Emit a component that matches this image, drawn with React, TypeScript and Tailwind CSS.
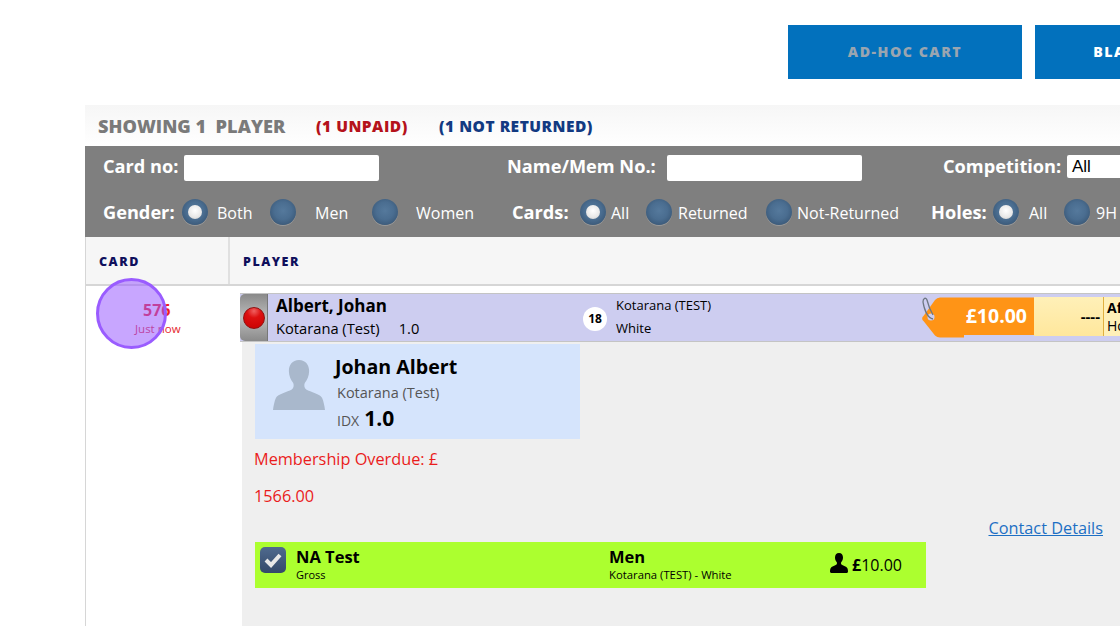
const font = { fontFamily: '"Open Sans", "Liberation Sans", sans-serif' };

const Radio = ({ checked = false }: { checked?: boolean }) => (
  <span className="flex h-[26px] w-[26px] shrink-0 items-center justify-center rounded-full bg-[radial-gradient(circle_at_50%_45%,#55799c_0%,#4a6d90_45%,#304b68_100%)] shadow-[0_1px_0_#9a9a9a]">
    {checked && (
      <span className="h-[14px] w-[14px] rounded-full bg-[radial-gradient(circle_at_50%_40%,#ffffff_0%,#e8e8e8_60%,#c4c4c4_100%)]" />
    )}
  </span>
);

const Avatar = () => (
  <svg width="52" height="50" viewBox="0 0 54 50" preserveAspectRatio="none" className="fill-[#a9b8cc]">
    <path d="M27 0c-7 0-10.500 5-10.500 11 0 5 2 9 4.500 12 1 2 .5 5-1.500 6.500C15 32 5 34 3 38 1.500 41 .500 46 0 50h54c-.5-4-1.500-9-3-12-2-4-12-6-16.500-8.500-2-1.500-2.500-4.500-1.500-6.500 2.500-3 4.500-7 4.500-12C37.500 5 34 0 27 0z" />
  </svg>
);

const PersonIcon = () => (
  <svg width="18" height="20" viewBox="0 0 18 20" className="mb-[4px] fill-black">
    <path d="M9 0C6.300 0 5 2 5 4.500c0 2 .8 3.600 1.800 4.800.4.800.2 1.900-.6 2.500C4.500 12.800 1.500 13.500.6 15.200.2 16 0 17.500 0 18.500 0 19.500 1 20 2 20h14c1 0 2-.5 2-1.500 0-1-.2-2.500-.6-3.300-.9-1.700-3.900-2.400-5.600-3.400-.8-.6-1-1.700-.6-2.500C12.200 8.100 13 6.500 13 4.500 13 2 11.700 0 9 0z" />
  </svg>
);

const PriceTag = () => (
  <div className="relative flex h-[42px] w-[112px] shrink-0 items-center justify-end pr-[7px]">
    <svg width="112" height="48" viewBox="0 0 112 48" className="absolute left-0 top-[-1px]">
      <path d="M18 1.500H112V39H42V41.500H18Q15 41.500 13 39.500L1.500 25a3 3 0 0 1 0-5L13 4Q15 1.500 18 1.500z" fill="#ff9416" />
      <circle cx="9" cy="21" r="3.500" fill="#cdcdf0" />
      <path d="M11 23C5 22 2 12 1 6 1 2 4 1 5 4 6 8 8 14 11 19" fill="none" stroke="#6d7682" strokeWidth="1.300" />
    </svg>
    <span className="relative mb-[3px] text-[19.500px] font-bold text-white">£10.00</span>
  </div>
);

const labelClass = "text-[18.200px] font-bold leading-none text-white";
const optionClass = "text-[16px] leading-none text-white";

export default function App() {
  return (
    <div className="h-[626px] w-[1120px] overflow-hidden bg-white text-black" style={font}>
      <div className="w-[1300px]">
        {/* Top buttons */}
        <div className="ml-[788px] flex gap-[13px] pt-[25px]">
          <button className="h-[54px] w-[234px] bg-[#0271bd] text-[14.200px] font-extrabold tracking-[1.500px] text-[#9aa5b0]">
            AD-HOC CART
          </button>
          <button className="h-[54px] w-[234px] bg-[#0271bd] text-[14.200px] font-extrabold tracking-[1.500px] text-white">
            BLANK CARDS
          </button>
        </div>

        <div className="ml-[85px] mt-[26px]">
          {/* Summary */}
          <div className="flex h-[41px] items-center bg-gradient-to-b from-[#f6f6f6] to-white pl-[13px] pt-[3px]">
            <span className="w-[218px] whitespace-pre text-[18.200px] font-extrabold text-[#7a7a7a]">SHOWING 1  PLAYER</span>
            <span className="w-[123px] text-[15.500px] font-extrabold tracking-[.5px] text-[#b5121b]">(1 UNPAID)</span>
            <span className="text-[15.500px] font-extrabold tracking-[.5px] text-[#123a82]">(1 NOT RETURNED)</span>
          </div>

          {/* Filters */}
          <div className="h-[91px] bg-[#7f7f7f] pl-[18px]">
            <div className="flex h-[47px] items-center pb-[3px]">
              <span className={`${labelClass} w-[81px] pb-[4px]`}>Card no:</span>
              <input className="h-[26px] w-[195px] rounded-[2px] bg-white" />
              <span className={`${labelClass} ml-[128px] w-[160px] pb-[4px]`}>Name/Mem No.:</span>
              <input className="h-[26px] w-[195px] rounded-[2px] bg-white" />
              <span className={`${labelClass} ml-[81px] w-[124px] pb-[4px]`}>Competition:</span>
              <div className="mb-[3px] flex h-[23px] w-[120px] items-center rounded-[2px] bg-white pl-[5px] text-[17px]" style={{ fontFamily: '"Liberation Sans", sans-serif' }}>
                All
              </div>
            </div>
            <div className="flex h-[38px] items-center">
              <span className={`${labelClass} w-[79px]`}>Gender:</span>
              <Radio checked />
              <span className={`${optionClass} ml-[9px] w-[53px] pt-[1px]`}>Both</span>
              <Radio />
              <span className={`${optionClass} ml-[19px] w-[57px] pt-[1px]`}>Men</span>
              <Radio />
              <span className={`${optionClass} ml-[18px] w-[96px] pt-[1px]`}>Women</span>
              <span className={`${labelClass} w-[68px]`}>Cards:</span>
              <Radio checked />
              <span className={`${optionClass} ml-[5px] w-[35px] pt-[1px]`}>All</span>
              <Radio />
              <span className={`${optionClass} ml-[6px] w-[88px] pt-[1px]`}>Returned</span>
              <Radio />
              <span className={`${optionClass} ml-[5px] w-[134px] pt-[1px]`}>Not-Returned</span>
              <span className={`${labelClass} w-[62px]`}>Holes:</span>
              <Radio checked />
              <span className={`${optionClass} ml-[10px] w-[35px] pt-[1px]`}>All</span>
              <Radio />
              <span className={`${optionClass} ml-[6px] pt-[1px]`}>9H</span>
            </div>
          </div>

          {/* Column headers */}
          <div className="flex h-[49px] border-b-2 border-l border-[#d6d6d6] bg-[#f6f6f6] text-[12.500px] font-extrabold tracking-[1.500px] text-[#0f0f5c]">
            <div className="flex w-[144px] items-center border-r-2 border-[#e0e0e0] pl-[13px] pt-[3px]">CARD</div>
            <div className="flex items-center pl-[13px] pt-[3px]">PLAYER</div>
          </div>

          {/* Body */}
          <div className="relative flex h-[341px] border-l border-[#d6d6d6]">
            <div className="w-[154px] shrink-0 pt-[14px] pl-[49px]">
              <div className="w-[72px] pl-[8px] text-[16px] font-bold leading-[20px] text-[#ef1c24]">576</div>
              <div className="whitespace-nowrap text-[11.500px] leading-[18px] text-[#e5262e]">Just now</div>
            </div>

            <div className="flex-1 pt-[7px]">
              {/* Player row */}
              <div className="flex h-[49px] border-y border-[#c4c4c4] bg-[#cdcdf0]">
                <div className="flex w-[28px] shrink-0 items-center justify-center rounded-l-[5px] border-r border-[#777777] bg-gradient-to-b from-[#8a8a8a] via-[#bdbdbd] to-[#8a8a8a]">
                  <span className="mt-[1px] h-[22px] w-[22px] rounded-full border border-[#8f1010] bg-[radial-gradient(circle_at_50%_15%,#f06060_0%,#dd1010_35%,#c80000_100%)]" />
                </div>
                <div className="w-[315px] shrink-0 pl-[8px]">
                  <div className="text-[17px] font-bold leading-[23px]">Albert, Johan</div>
                  <div className="whitespace-pre text-[14.700px] leading-[22px]">Kotarana (Test)     1.0</div>
                </div>
                <div className="mt-[13px] flex h-[24px] w-[24px] shrink-0 items-center justify-center rounded-full bg-white text-[12px] font-bold">
                  18
                </div>
                <div className="ml-[9px] w-[306px] shrink-0 text-[13px] leading-[23px]">
                  <div>Kotarana (TEST)</div>
                  <div>White</div>
                </div>
                <div className="flex items-center">
                  <PriceTag />
                </div>
                <div className="my-auto flex h-[39px] w-[69px] shrink-0 -translate-y-[1px] items-center justify-end bg-gradient-to-b from-[#fff0b8] to-[#ffe79c] pr-[3px] text-[15px] font-bold">
                  ----
                </div>
                <div className="my-auto flex h-[39px] w-[100px] -translate-y-[1px] flex-col justify-center border-l border-[#e0b040] bg-[#fff0b8] pl-[3px] text-[14px] leading-[18px]">
                  <span className="font-bold">Af</span>
                  <span>Ho</span>
                </div>
              </div>

              {/* Details */}
              <div className="ml-[2px] h-[285px] bg-[#efefef] pl-[13px] pt-[2px]">
                <div className="flex h-[95px] w-[325px] bg-[#d5e4fc] pl-[18px] pt-[11px]">
                  <div className="w-[62px] pt-[5px]">
                    <Avatar />
                  </div>
                  <div>
                    <div className="text-[19.600px] font-bold leading-[24px]">Johan Albert</div>
                    <div className="ml-[2px] mt-[4px] text-[14.500px] leading-[20px] text-[#555555]">Kotarana (Test)</div>
                    <div className="ml-[2px] flex items-baseline gap-[5px] text-[14px] text-[#555555]">
                      IDX <span className="text-[21px] font-bold leading-[30px] text-black">1.0</span>
                    </div>
                  </div>
                </div>
                <div className="-ml-[1px] mt-[9px] text-[16.300px] leading-[22px] text-[#ea1c1c]">Membership Overdue: £</div>
                <div className="-ml-[1px] mt-[15px] text-[16.300px] leading-[22px] text-[#ea1c1c]">1566.00</div>
                <div className="flex h-[32px] w-[848px] items-end justify-end">
                  <a className="text-[16.300px] leading-[22px] text-[#1d6fc4] underline">Contact Details</a>
                </div>
                <div className="mt-[3px] flex h-[46px] w-[671px] items-center bg-[#acff2f] pl-[5px]">
                  <span className="mb-[10px] flex h-[26px] w-[26px] shrink-0 items-center justify-center rounded-[5px] bg-gradient-to-b from-[#4f6a8e] to-[#34496a]">
                    <svg width="18" height="16" viewBox="0 0 18 16">
                      <path d="M2 8l5 5 9-10" fill="none" stroke="#e8e8e8" strokeWidth="4" />
                    </svg>
                  </span>
                  <div className="ml-[10px] w-[313px] pb-[3px]">
                    <div className="text-[16.500px] font-bold leading-[21px]">NA Test</div>
                    <div className="text-[11px] leading-[15px]">Gross</div>
                  </div>
                  <div className="w-[221px] pb-[3px]">
                    <div className="text-[16.500px] font-bold leading-[21px]">Men</div>
                    <div className="text-[11.300px] leading-[15px]">Kotarana (TEST) - White</div>
                  </div>
                  <PersonIcon />
                  <span className="mb-[1px] ml-[4px] text-[16px]">
                    <b>£</b>10.00
                  </span>
                </div>
              </div>
            </div>

            {/* Click highlight */}
            <div className="absolute left-[10px] top-[-8px] h-[71px] w-[71px] rounded-full border-[3px] border-[#9a5cff] bg-[#9a5cff]/55" />
          </div>
        </div>
      </div>
    </div>
  );
}
